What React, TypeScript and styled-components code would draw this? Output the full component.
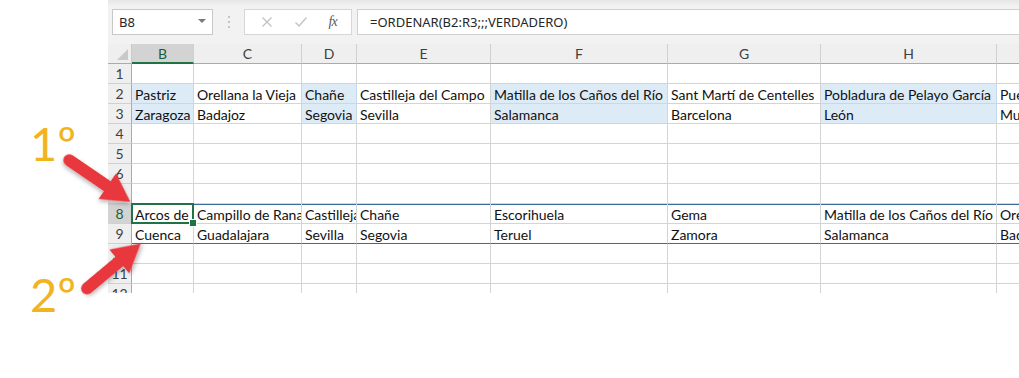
import React from "react";
import styled, { createGlobalStyle, css } from "styled-components";

const GlobalStyle = createGlobalStyle`
  html, body { margin: 0; padding: 0; background: #ffffff; }
  body { font-family: "Lato", "Liberation Sans", sans-serif; }
  * { box-sizing: border-box; }
`;

const COLS = [62, 108, 55, 134, 177, 153, 176, 140];
const LETTERS = ["B", "C", "D", "E", "F", "G", "H", "I"];

type Row = { n: number; cells?: string[]; fill?: boolean; spill?: "top" | "bottom" };

const ROWS: Row[] = [
  { n: 1 },
  {
    n: 2,
    fill: true,
    cells: [
      "Pastriz",
      "Orellana la Vieja",
      "Chañe",
      "Castilleja del Campo",
      "Matilla de los Caños del Río",
      "Sant Martí de Centelles",
      "Pobladura de Pelayo García",
      "Puerto Lumbreras",
    ],
  },
  {
    n: 3,
    fill: true,
    cells: ["Zaragoza", "Badajoz", "Segovia", "Sevilla", "Salamanca", "Barcelona", "León", "Murcia"],
  },
  { n: 4 },
  { n: 5 },
  { n: 6 },
  { n: 7 },
  {
    n: 8,
    spill: "top",
    cells: [
      "Arcos de la Salina",
      "Campillo de Ranas",
      "Castilleja del Campo",
      "Chañe",
      "Escorihuela",
      "Gema",
      "Matilla de los Caños del Río",
      "Orellana la Vieja",
    ],
  },
  {
    n: 9,
    spill: "bottom",
    cells: ["Cuenca", "Guadalajara", "Sevilla", "Segovia", "Teruel", "Zamora", "Salamanca", "Badajoz"],
  },
  { n: 10 },
  { n: 11 },
  { n: 12 },
];

const Page = styled.div`
  position: relative;
  width: 1019px;
  height: 378px;
  display: flex;
  background: #ffffff;
  overflow: hidden;
`;

const Annotations = styled.div`
  width: 108px;
  flex: none;
  display: flex;
  flex-direction: column;
  padding-left: 30px;
`;

const Ordinal = styled.div<{ $gap: number }>`
  margin-top: ${(p) => p.$gap}px;
  font-family: "Lato", "Open Sans", sans-serif;
  font-weight: 400;
  font-size: 47px;
  line-height: 47px;
  color: #f1b420;
  white-space: nowrap;
`;

const Sheet = styled.div`
  width: 911px;
  height: 293px;
  flex: none;
  display: flex;
  flex-direction: column;
  overflow: hidden;
  background: #ffffff;
`;

const Toolbar = styled.div`
  height: 44px;
  flex: none;
  display: flex;
  align-items: flex-start;
  padding: 9px 0 0 4px;
  background: linear-gradient(#e6e6e6 0px, #f2f2f2 6px, #f2f2f2 100%);
`;

const NameBox = styled.div`
  width: 101px;
  height: 26px;
  background: #ffffff;
  border: 1px solid #c8c8c8;
  display: flex;
  align-items: center;
  justify-content: space-between;
  padding: 0 6px 0 6px;
  font-family: "Noto Sans", "Open Sans", sans-serif;
  font-size: 13px;
  color: #262626;
`;

const Caret = styled.span`
  width: 0;
  height: 0;
  border-left: 4px solid transparent;
  border-right: 4px solid transparent;
  border-top: 4px solid #7a7a7a;
  margin-bottom: 2px;
`;

const Dots = styled.div`
  width: 31px;
  height: 26px;
  display: flex;
  flex-direction: column;
  align-items: center;
  justify-content: center;
  gap: 3px;
  & > span {
    width: 2px;
    height: 2px;
    background: #c4c4c4;
  }
`;

const FxBox = styled.div`
  width: 108px;
  height: 26px;
  background: #ffffff;
  border: 1px solid #d6d6d6;
  display: flex;
  align-items: center;
  justify-content: space-around;
  padding: 0 4px 0 6px;
  color: #c0c0c0;
`;

const FxLabel = styled.span`
  font-family: "Liberation Serif", serif;
  font-style: italic;
  font-size: 14px;
  color: #5a5a5a;
  letter-spacing: -1px;
`;

const FormulaInput = styled.div`
  margin-left: 5px;
  flex: 1;
  height: 26px;
  background: #ffffff;
  border: 1px solid #d0d0d0;
  border-right: none;
  display: flex;
  align-items: center;
  padding-left: 12px;
  font-family: "Noto Sans", "Open Sans", sans-serif;
  font-size: 13px;
  color: #262626;
`;

const Grid = styled.div`
  display: grid;
  grid-template-columns: 24px ${COLS.map((c) => `${c}px`).join(" ")};
  grid-auto-rows: 20px;
  font-family: "Lato", "Carlito", sans-serif;
  font-size: 14px;
  color: #111111;
`;

const headerBase = css`
  background: #efefef;
  color: #3f3f3f;
  display: flex;
  align-items: center;
  justify-content: center;
  font-size: 14px;
`;

const Corner = styled.div`
  ${headerBase};
  border-right: 1px solid #c9c9c9;
  border-bottom: 1px solid #ababab;
  position: relative;
  &::after {
    content: "";
    position: absolute;
    right: 3px;
    bottom: 3px;
    width: 0;
    height: 0;
    border-left: 11px solid transparent;
    border-bottom: 11px solid #c9c9c9;
  }
`;

const ColHeader = styled.div<{ $active?: boolean }>`
  ${headerBase};
  border-right: 1px solid #d0d0d0;
  border-bottom: ${(p) => (p.$active ? "2px solid #217346" : "1px solid #ababab")};
  background: ${(p) => (p.$active ? "#d3d3d3" : "#efefef")};
  color: ${(p) => (p.$active ? "#1e5c3a" : "#3f3f3f")};
  padding-top: ${(p) => (p.$active ? "1px" : "0")};
`;

const RowHeader = styled.div<{ $active?: boolean }>`
  ${headerBase};
  border-right: 1px solid #ababab;
  border-bottom: 1px solid #d0d0d0;
  background: ${(p) => (p.$active ? "#d3d3d3" : "#efefef")};
  color: ${(p) => (p.$active ? "#1e5c3a" : "#3f3f3f")};
`;

const Cell = styled.div<{ $fill?: boolean; $spill?: "top" | "bottom"; $selected?: boolean }>`
  position: relative;
  min-width: 0;
  background: ${(p) => (p.$fill ? "#ddebf7" : "#ffffff")};
  border-right: 1px solid ${(p) => (p.$fill ? "#c6d9ec" : "#d4d4d4")};
  border-bottom: 1px solid
    ${(p) => (p.$spill === "bottom" ? "#3d6b9c" : p.$fill ? "#c6d9ec" : "#d4d4d4")};
  ${(p) =>
    p.$spill === "top" &&
    css`
      box-shadow: inset 0 1px 0 #3d6b9c;
    `}
  ${(p) =>
    p.$selected &&
    css`
      z-index: 2;
      &::before {
        content: "";
        position: absolute;
        top: -1px;
        left: -1px;
        right: -1px;
        bottom: -1px;
        border: 2px solid #217346;
      }
      &::after {
        content: "";
        position: absolute;
        right: -4px;
        bottom: -4px;
        width: 6px;
        height: 6px;
        background: #217346;
        border: 1px solid #ffffff;
      }
    `}
`;

const CellText = styled.div`
  height: 100%;
  padding: 1px 0 0 3px;
  line-height: 19px;
  white-space: nowrap;
  overflow: hidden;
`;

const ArrowLayer = styled.svg`
  position: absolute;
  left: 0;
  top: 0;
  width: 1019px;
  height: 378px;
  pointer-events: none;
`;

function Arrow({ x, y, len, angle }: { x: number; y: number; len: number; angle: number }) {
  const h = 28;
  const d = `M4,-6 L${len - h},-6 L${len - h},-15.5 L${len},0 L${len - h},15.5 L${len - h},6 L4,6 A6,6 0 0 1 4,-6 Z`;
  return (
    <g transform={`translate(${x},${y}) rotate(${angle})`}>
      <path d={d} fill="#e8383d" filter="url(#shadow)" />
    </g>
  );
}

export default function App() {
  return (
    <>
      <GlobalStyle />
      <Page>
        <Annotations>
          <Ordinal $gap={120}>1º</Ordinal>
          <Ordinal $gap={104}>2º</Ordinal>
        </Annotations>
        <Sheet>
          <Toolbar>
            <NameBox>
              <span>B8</span>
              <Caret />
            </NameBox>
            <Dots>
              <span />
              <span />
              <span />
            </Dots>
            <FxBox>
              <svg width="12" height="12" viewBox="0 0 12 12">
                <path d="M1.5 1.5 L10.5 10.5 M10.5 1.5 L1.5 10.5" stroke="#c2c2c2" strokeWidth="1.3" fill="none" />
              </svg>
              <svg width="14" height="12" viewBox="0 0 14 12">
                <path d="M1.5 6.5 L5 10 L12.5 1.5" stroke="#c2c2c2" strokeWidth="1.3" fill="none" />
              </svg>
              <FxLabel>fx</FxLabel>
            </FxBox>
            <FormulaInput>=ORDENAR(B2:R3;;;VERDADERO)</FormulaInput>
          </Toolbar>
          <Grid>
            <Corner />
            {LETTERS.map((l) => (
              <ColHeader key={l} $active={l === "B"}>
                {l}
              </ColHeader>
            ))}
            {ROWS.map((r) => (
              <React.Fragment key={r.n}>
                <RowHeader $active={r.n === 8}>{r.n}</RowHeader>
                {LETTERS.map((l, i) => (
                  <Cell
                    key={l}
                    $fill={r.fill && i % 2 === 0}
                    $spill={r.spill}
                    $selected={r.n === 8 && i === 0}
                  >
                    <CellText>{r.cells ? r.cells[i] : ""}</CellText>
                  </Cell>
                ))}
              </React.Fragment>
            ))}
          </Grid>
        </Sheet>
        <ArrowLayer viewBox="0 0 1019 378">
          <defs>
            <filter id="shadow" x="-30%" y="-30%" width="160%" height="160%">
              <feDropShadow dx="1" dy="2" stdDeviation="2" floodColor="#000000" floodOpacity="0.3" />
            </filter>
          </defs>
          <Arrow x={66} y={158} len={78} angle={34.3} />
          <Arrow x={84} y={291} len={74} angle={-39.9} />
        </ArrowLayer>
      </Page>
    </>
  );
}
